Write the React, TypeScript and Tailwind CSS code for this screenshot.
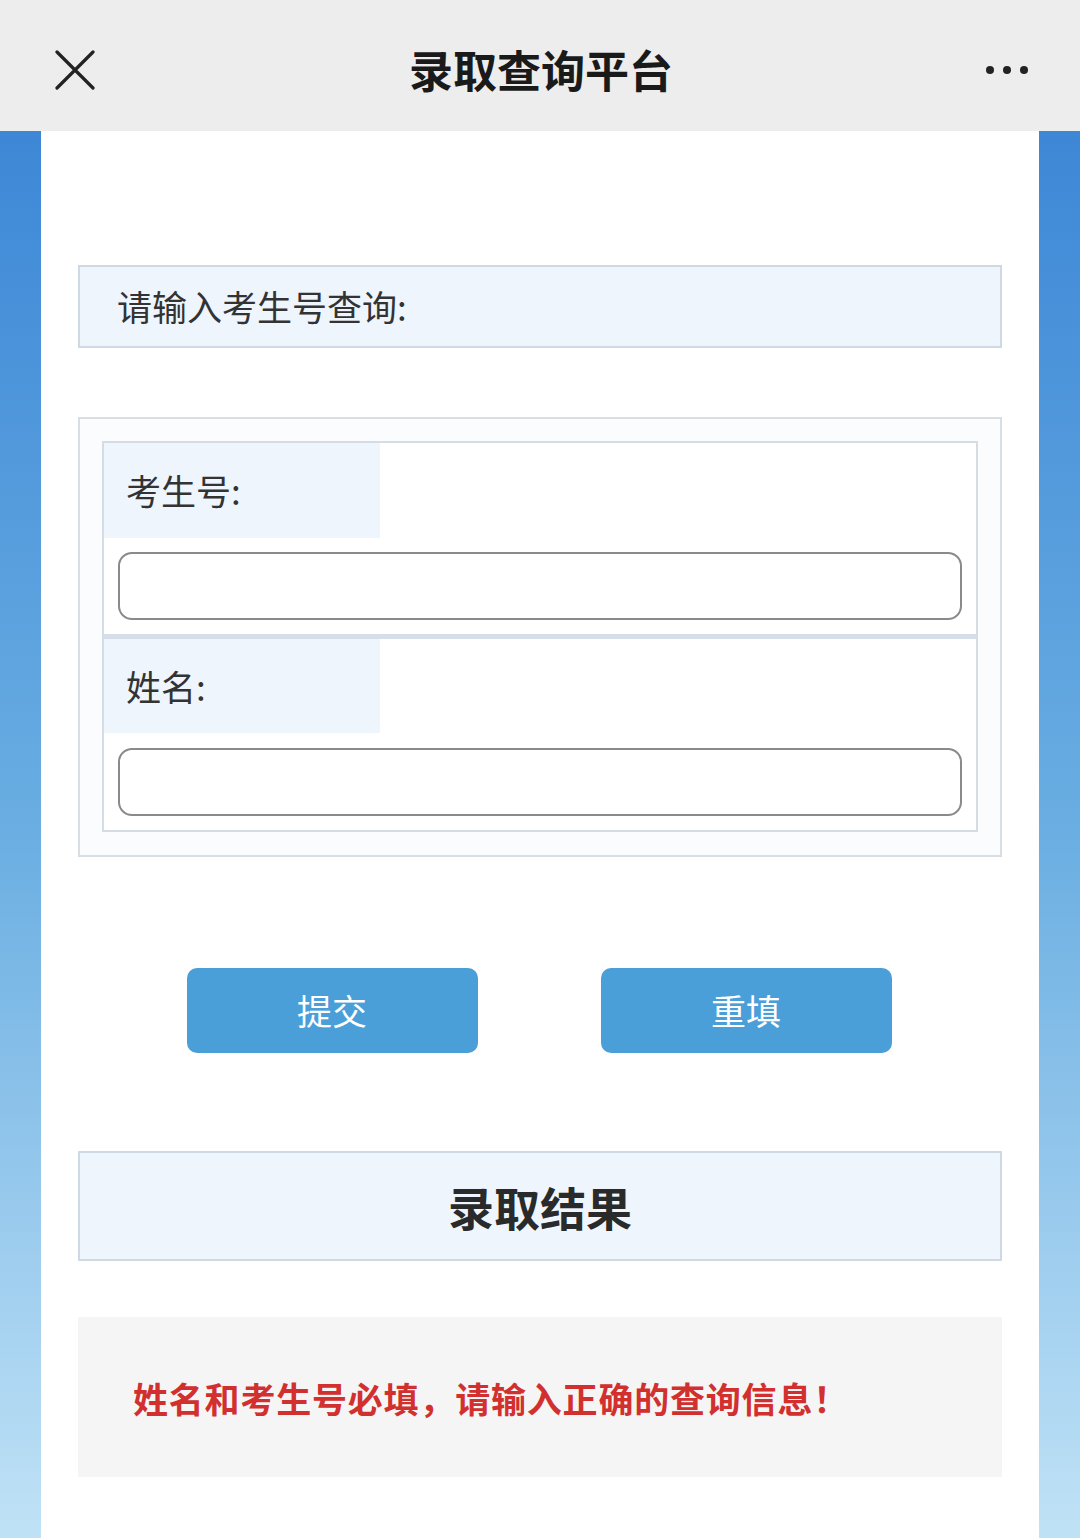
import React from "react";

const font = { fontFamily: '"Noto Sans CJK SC", "Noto Sans", sans-serif' };

export default function App() {
  return (
    <div
      className="w-[1080px] h-[1538px] overflow-hidden flex flex-col bg-[#ededed]"
      style={font}
    >
      {/* Header */}
      <div className="h-[131px] shrink-0 bg-[#ededed] flex items-center justify-between px-[55px] relative">
        <svg width="40" height="40" viewBox="0 0 40 40" className="mt-[8px]">
          <path d="M2 2 L38 38 M38 2 L2 38" stroke="#222" strokeWidth="3.2" strokeLinecap="round" />
        </svg>
        <div className="absolute left-0 right-0 text-center text-[44px] font-bold text-[#1a1a1a] leading-none pointer-events-none mt-[6px] pl-[2px]">
          录取查询平台
        </div>
        <div className="flex gap-[9px] mr-[-3px] mt-[8px]">
          <span className="w-[8px] h-[8px] rounded-full bg-[#222]" />
          <span className="w-[8px] h-[8px] rounded-full bg-[#222]" />
          <span className="w-[8px] h-[8px] rounded-full bg-[#222]" />
        </div>
      </div>

      {/* Body with blue sides */}
      <div className="flex-1 px-[41px] bg-gradient-to-b from-[#3d87d6] via-[#6aaee2] to-[#c0e2f6]">
        <div className="h-full bg-white px-[37px] pt-[134px] flex flex-col">
          {/* Prompt box */}
          <div className="h-[83px] bg-[#eef5fd] border-2 border-[#cfd9e3] flex items-center pl-[37px] text-[35px] text-[#333]">
            请输入考生号查询:
          </div>

          {/* Form */}
          <div className="mt-[69px] border-2 border-[#d9dee3] bg-[#fbfcfd] p-[22px] pb-[23px]">
            <div className="border-2 border-[#d6dce3] bg-white">
              <div className="border-b-[5px] border-[#d5dee9] pb-[14px]">
                <div className="w-[276px] h-[95px] bg-[#eef5fd] flex items-center pl-[22px] text-[35px] text-[#333]">
                  考生号:
                </div>
                <div className="mx-[14px] mt-[14px] h-[68px] rounded-[14px] border-2 border-[#8a8a8a] bg-white" />
              </div>
              <div className="pb-[14px]">
                <div className="w-[276px] h-[94px] bg-[#eef5fd] flex items-center pl-[22px] text-[35px] text-[#333]">
                  姓名:
                </div>
                <div className="mx-[14px] mt-[15px] h-[68px] rounded-[14px] border-2 border-[#8a8a8a] bg-white" />
              </div>
            </div>
          </div>

          {/* Buttons */}
          <div className="mt-[111px] flex justify-center gap-[123px] pr-[2px]">
            <div className="w-[291px] h-[85px] rounded-[10px] bg-[#4a9fd9] flex items-center justify-center text-white text-[35px]">
              提交
            </div>
            <div className="w-[291px] h-[85px] rounded-[10px] bg-[#4a9fd9] flex items-center justify-center text-white text-[35px]">
              重填
            </div>
          </div>

          {/* Result title */}
          <div className="mt-[98px] h-[110px] bg-[#eef5fd] border-2 border-[#cfd9e3] flex items-center justify-center text-[46px] font-bold text-[#2a2a2a]">
            录取结果
          </div>

          {/* Message */}
          <div className="mt-[56px] h-[160px] bg-[#f5f5f5] flex items-center pl-[55px] pt-[2px] text-[35px] font-bold text-[#d2302f] tracking-[0.8px]">
            姓名和考生号必填，请输入正确的查询信息！
          </div>
        </div>
      </div>
    </div>
  );
}
